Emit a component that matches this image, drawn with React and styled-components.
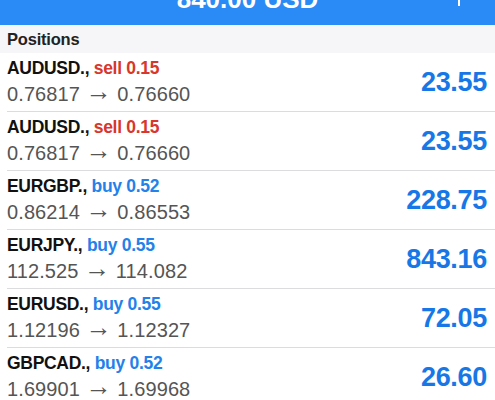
import React from 'react'
import styled, { createGlobalStyle } from 'styled-components'

const GlobalStyle = createGlobalStyle`
  html, body {
    margin: 0;
    padding: 0;
    background: #ffffff;
  }
  body {
    font-family: "Liberation Sans", Arial, Helvetica, sans-serif;
    -webkit-font-smoothing: antialiased;
  }
`

const positions = [
  { symbol: 'AUDUSD.', side: 'sell', volume: '0.15', open: '0.76817', current: '0.76660', profit: '23.55' },
  { symbol: 'AUDUSD.', side: 'sell', volume: '0.15', open: '0.76817', current: '0.76660', profit: '23.55' },
  { symbol: 'EURGBP.', side: 'buy', volume: '0.52', open: '0.86214', current: '0.86553', profit: '228.75' },
  { symbol: 'EURJPY.', side: 'buy', volume: '0.55', open: '112.525', current: '114.082', profit: '843.16' },
  { symbol: 'EURUSD.', side: 'buy', volume: '0.55', open: '1.12196', current: '1.12327', profit: '72.05' },
  { symbol: 'GBPCAD.', side: 'buy', volume: '0.52', open: '1.69901', current: '1.69968', profit: '26.60' },
]

const App = () => {
  return (
    <Screen>
      <GlobalStyle />
      <NavBar>
        <span />
        <Balance>840.00 USD</Balance>
        <AddButton>
          <svg width="22" height="22" viewBox="0 0 22 22">
            <path d="M11 0 V22 M0 11 H22" stroke="#ffffff" strokeWidth="2" fill="none" />
          </svg>
        </AddButton>
      </NavBar>
      <SectionHeader>Positions</SectionHeader>
      <List>
        {positions.map((p, i) => (
          <Row key={i}>
            <Info>
              <Title>
                {p.symbol}, <Side $side={p.side}>{p.side} {p.volume}</Side>
              </Title>
              <Prices>
                {p.open} <Arrow>→</Arrow> {p.current}
              </Prices>
            </Info>
            <Profit>{p.profit}</Profit>
          </Row>
        ))}
      </List>
    </Screen>
  )
}

export default App

const Screen = styled.div`
  width: 495px;
  height: 400px;
  overflow: hidden;
  background: #ffffff;
`

const NavBar = styled.div`
  height: 25px;
  background: #2a8bf6;
  overflow: hidden;
  display: grid;
  grid-template-columns: 1fr auto 1fr;
  align-items: start;
`

const Balance = styled.div`
  margin-top: -14px;
  font-size: 26px;
  line-height: 26px;
  font-weight: 700;
  color: #ffffff;
`

const AddButton = styled.div`
  justify-self: end;
  margin-right: 25px;
  margin-top: -16px;
  display: flex;
`

const SectionHeader = styled.div`
  height: 28px;
  background: #f6f6f8;
  padding: 0 7px;
  display: flex;
  align-items: center;
  font-size: 16.5px;
  font-weight: 700;
  color: #222222;
  letter-spacing: -0.2px;
`

const List = styled.div`
  display: flex;
  flex-direction: column;
`

const Row = styled.div`
  height: 58px;
  margin-left: 7px;
  padding-right: 8px;
  display: flex;
  align-items: center;
  justify-content: space-between;
  border-bottom: 1px solid #dcdcdf;
`

const Info = styled.div`
  align-self: flex-start;
  padding-top: 3px;
  display: flex;
  flex-direction: column;
`

const Title = styled.div`
  font-size: 17.5px;
  line-height: 24px;
  font-weight: 700;
  color: #111111;
  letter-spacing: -0.3px;
`

const Side = styled.span`
  color: ${(p) => (p.$side === 'sell' ? '#d8372c' : '#2481ea')};
`

const Prices = styled.div`
  font-size: 20px;
  line-height: 28px;
  color: #555555;
  letter-spacing: 0.1px;
`

const Arrow = styled.span`
  font-size: 26px;
  line-height: 0;
  vertical-align: 1px;
  letter-spacing: 0;
`

const Profit = styled.div`
  font-size: 27px;
  font-weight: 700;
  color: #1877e6;
  letter-spacing: -0.3px;
`
